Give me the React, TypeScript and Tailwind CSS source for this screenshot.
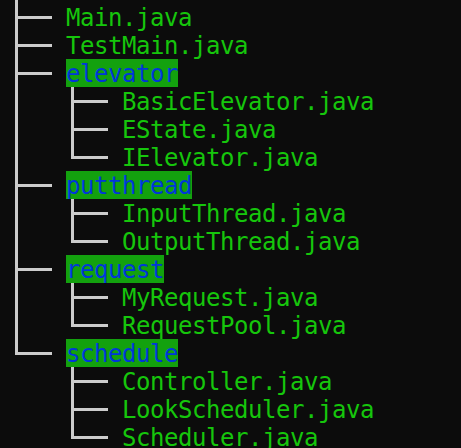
type Link = "pipe" | "tee" | "elbow" | "blank";

type Row = {
  links: Link[];
  name: string;
  dir?: boolean;
};

const rows: Row[] = [
  { links: ["tee"], name: "Main.java" },
  { links: ["tee"], name: "TestMain.java" },
  { links: ["tee"], name: "elevator", dir: true },
  { links: ["pipe", "tee"], name: "BasicElevator.java" },
  { links: ["pipe", "tee"], name: "EState.java" },
  { links: ["pipe", "elbow"], name: "IElevator.java" },
  { links: ["tee"], name: "putthread", dir: true },
  { links: ["pipe", "tee"], name: "InputThread.java" },
  { links: ["pipe", "elbow"], name: "OutputThread.java" },
  { links: ["tee"], name: "request", dir: true },
  { links: ["pipe", "tee"], name: "MyRequest.java" },
  { links: ["pipe", "elbow"], name: "RequestPool.java" },
  { links: ["elbow"], name: "schedule", dir: true },
  { links: ["blank", "tee"], name: "Controller.java" },
  { links: ["blank", "tee"], name: "LookScheduler.java" },
  { links: ["blank", "elbow"], name: "Scheduler.java" },
];

const LINE = "#cccccc";

const Connector = ({ kind }: { kind: Link }) => (
  <svg width="56" height="28" viewBox="0 0 56 28" className="shrink-0">
    {kind !== "blank" && (
      <rect x="5" y="0" width="3" height={kind === "elbow" ? 16 : 28} fill={LINE} />
    )}
    {(kind === "tee" || kind === "elbow") && (
      <rect x="5" y="13" width="37" height="3" fill={LINE} />
    )}
  </svg>
);

const App: React.FC = () => {
  return (
    <div
      className="h-[448px] w-[461px] overflow-hidden bg-[#0c0c0c] pl-[10px] text-[24px] leading-[30px] tracking-[-0.45px] text-[#16c60c]"
      style={{ fontFamily: '"DejaVu Sans Mono", "Liberation Mono", monospace' }}
    >
      <div className="ml-[5px] h-[3px] w-[3px] bg-[#cccccc]" />
      {rows.map((row) => (
        <div key={row.name} className="flex h-[28px] items-start whitespace-pre">
          {row.links.map((l, i) => (
            <Connector key={i} kind={l} />
          ))}
          {row.dir ? (
            <span className="inline-block h-[28px] bg-[#13a10e] text-[#0037da]">{row.name}</span>
          ) : (
            <span>{row.name}</span>
          )}
        </div>
      ))}
    </div>
  );
};

export default App;
